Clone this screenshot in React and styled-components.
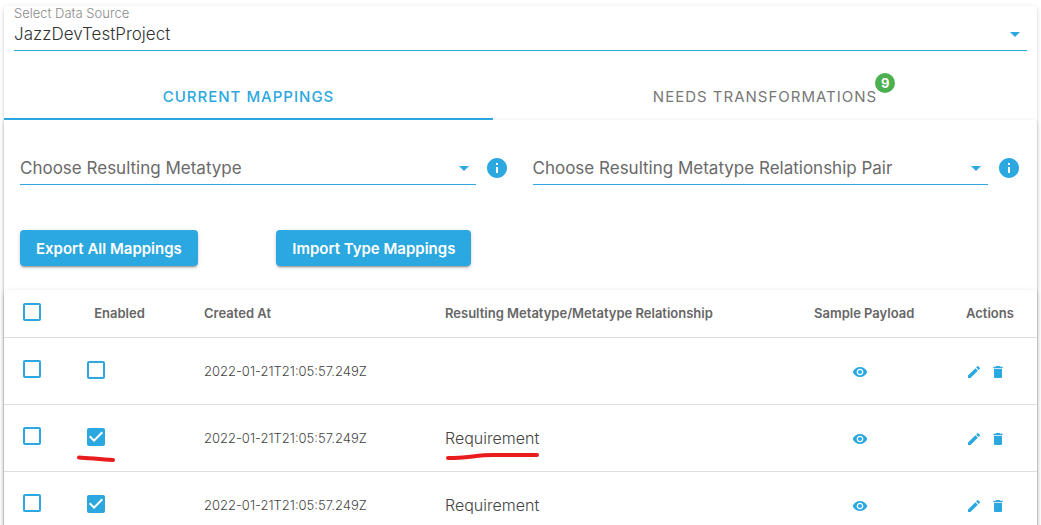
import React, { useState } from "react";
import styled, { createGlobalStyle, css } from "styled-components";
import {
  MdArrowDropDown,
  MdDelete,
  MdEdit,
  MdInfo,
  MdVisibility,
} from "react-icons/md";

const blue = "#2ca8e0";
const red = "#e81c1c";

const GlobalStyle = createGlobalStyle`
  * {
    box-sizing: border-box;
  }

  body {
    margin: 0;
    background: #fff;
    color: #444;
    font-family: "Inter", sans-serif;
    font-size: 16px;
  }
`;

//Basic surfaces
const Page = styled.main`
  height: 100vh;
  padding: 6px 4px 0;
  overflow: hidden;
`;

const raised = css`
  border-radius: 4px;
  background: #fff;
  box-shadow: 0 3px 1px -2px rgba(0, 0, 0, 0.2),
    0 2px 2px 0 rgba(0, 0, 0, 0.14), 0 1px 5px 0 rgba(0, 0, 0, 0.12);
`;

const Card = styled.section`
  ${raised}
`;

const SourceBar = styled.div`
  padding: 0 10px;
`;

//Select with the underline and the arrow
const Field = styled.div`
  flex: 1;
  min-width: 0;
`;

const FieldLabel = styled.label`
  display: block;
  color: #8a8a8a;
  font-size: 13px;
  font-weight: 300;
  line-height: 14px;
`;

const SelectBox = styled.div`
  display: grid;
  align-items: center;
  padding-bottom: 2px;
  border-bottom: 1px solid ${blue};

  svg {
    grid-area: 1 / 1;
    justify-self: end;
    color: ${blue};
    pointer-events: none;
  }
`;

const Select = styled.select`
  grid-area: 1 / 1;
  width: 100%;
  height: 28px;
  padding: 0 28px 1px 0;
  border: none;
  outline: none;
  appearance: none;
  background: transparent;
  color: ${(props) => (props.$placeholder ? "#6a6a6a" : "#333")};
  font-family: inherit;
  font-size: 17px;
  font-weight: ${(props) => (props.$placeholder ? 400 : 300)};
`;

//Tabs
const Tabs = styled.div`
  display: grid;
  grid-template-columns: 489fr 544fr;
  margin-top: 21px;
`;

const Tab = styled.button`
  height: 48px;
  padding: 0;
  border: none;
  background: transparent;
  box-shadow: ${(props) => (props.$active ? `inset 0 -2px ${blue}` : "none")};
  color: ${(props) => (props.$active ? blue : "#777")};
  font-family: inherit;
  font-size: 15px;
  font-weight: ${(props) => (props.$active ? 500 : 400)};
  letter-spacing: 1px;
  text-transform: uppercase;
  cursor: pointer;
`;

const TabText = styled.span`
  position: relative;
`;

const Badge = styled.span`
  position: absolute;
  bottom: 13px;
  left: calc(100% - 2px);
  width: 20px;
  height: 20px;
  border-radius: 50%;
  background: #4caf50;
  color: #fff;
  font-size: 13px;
  font-weight: 700;
  line-height: 20px;
  letter-spacing: 0;
  text-align: center;
`;

//Filters and the buttons below them
const Filters = styled.div`
  display: grid;
  grid-template-columns: 1fr 1fr;
  gap: 24px;
  padding: 34px 16px 0;
`;

const Filter = styled.div`
  display: flex;
  align-items: flex-start;
  gap: 9px;
`;

const IconButton = styled.button`
  display: inline-flex;
  align-items: center;
  justify-content: center;
  height: ${(props) => props.$height || 16}px;
  padding: 0;
  border: none;
  background: transparent;
  color: ${blue};
  cursor: pointer;
`;

const ButtonRow = styled.div`
  display: grid;
  grid-template-columns: repeat(4, 1fr);
  gap: 24px;
  padding: 45px 16px 24px;
`;

const Button = styled.button`
  ${raised}
  justify-self: start;
  height: 36px;
  padding: 0 16px;
  border: none;
  background: ${blue};
  color: #fff;
  font-family: inherit;
  font-size: 15px;
  font-weight: 600;
  white-space: nowrap;
  cursor: pointer;
`;

//Table
const Table = styled.table`
  width: 100%;
  border-collapse: separate;
  border-spacing: 0;
  table-layout: fixed;
`;

const Col = styled.col`
  width: ${(props) => (props.$width ? `${props.$width}px` : "auto")};
`;

const Th = styled.th`
  height: 48px;
  padding: 0 ${(props) => (props.$align === "center" ? 36 : 0)}px 2px 16px;
  border-bottom: 1px solid #dedede;
  color: #666;
  font-size: 13px;
  font-weight: 600;
  text-align: ${(props) => props.$align || "left"};
  white-space: nowrap;
`;

const Td = styled.td`
  height: 67px;
  padding: 0 0 0 16px;
  border-bottom: 1px solid #dedede;
  font-size: ${(props) => (props.$small ? 13 : 16)}px;
  font-weight: 300;
  white-space: nowrap;
`;

const CheckTd = styled(Td)`
  padding-bottom: 2px;
`;

const PayloadTd = styled(Td)`
  padding-right: 44px;
`;

const Actions = styled.div`
  display: flex;
  align-items: center;
  justify-content: ${(props) => props.$justify || "flex-start"};
  gap: 8px;
  padding-top: 2px;
`;

const CheckWrap = styled.span`
  display: grid;
  width: 18px;
  margin: ${(props) => (props.$inset ? "0 0 2px 3px" : "0")};

  input,
  svg {
    grid-area: 1 / 1;
  }

  svg {
    pointer-events: none;
  }
`;

const CheckInput = styled.input`
  width: 18px;
  height: 18px;
  margin: 0;
  border: 2px solid ${blue};
  border-radius: 2px;
  appearance: none;
  cursor: pointer;

  &:checked {
    background: ${blue};
  }
`;

//Pen strokes drawn under a cell's content
const Marked = styled.div`
  position: relative;
`;

const Stroke = styled.svg`
  position: absolute;
  top: 22px;
  left: ${(props) => props.$left}px;
  fill: none;
  stroke: ${red};
  stroke-width: 4;
  stroke-linecap: round;
  pointer-events: none;
`;

const mappings = [
  { id: 1, enabled: false, createdAt: "2022-01-21T21:05:57.249Z", result: "" },
  {
    id: 2,
    enabled: true,
    createdAt: "2022-01-21T21:05:57.249Z",
    result: "Requirement",
    marked: true,
  },
  {
    id: 3,
    enabled: true,
    createdAt: "2022-01-21T21:05:57.249Z",
    result: "Requirement",
  },
];

function Checkbox({ label, defaultChecked = false, inset }) {
  const [checked, setChecked] = useState(defaultChecked);

  return (
    <CheckWrap $inset={inset}>
      <CheckInput
        type="checkbox"
        aria-label={label}
        checked={checked}
        onChange={(e) => setChecked(e.target.checked)}
      />
      {checked && (
        <svg width="18" height="18" viewBox="3 3 18 18" aria-hidden="true">
          <path
            fill="#fff"
            d="M10 17L5 12L6.41 10.58L10 14.17L17.59 6.58L19 8Z"
          />
        </svg>
      )}
    </CheckWrap>
  );
}

function MetatypeFilter({ id, text }) {
  return (
    <Filter>
      <Field>
        <SelectBox>
          <Select id={id} aria-label={text} $placeholder>
            <option>{text}</option>
          </Select>
          <MdArrowDropDown size={24} />
        </SelectBox>
      </Field>
      <IconButton $height={28} aria-label={"About: " + text}>
        <MdInfo size={24} />
      </IconButton>
    </Filter>
  );
}

function MappingRow({ mapping }) {
  return (
    <tr>
      <CheckTd>
        <Checkbox label="Select row" inset />
      </CheckTd>
      <CheckTd>
        <Marked>
          <Checkbox label="Enabled" defaultChecked={mapping.enabled} />
          {mapping.marked && (
            <Stroke $left={-14} width="46" height="16">
              <path d="M6 7.5C16 8 28 9.5 40 10" />
            </Stroke>
          )}
        </Marked>
      </CheckTd>
      <Td $small>{mapping.createdAt}</Td>
      <Td>
        <Marked>
          {mapping.result}
          {mapping.marked && (
            <Stroke $left={0} width="98" height="16">
              <path d="M3 8C22 8 32 5 48 5H92" />
            </Stroke>
          )}
        </Marked>
      </Td>
      <PayloadTd>
        <Actions $justify="center">
          <IconButton aria-label="View sample payload">
            <MdVisibility size={16} />
          </IconButton>
        </Actions>
      </PayloadTd>
      <Td>
        <Actions>
          <IconButton aria-label="Edit mapping">
            <MdEdit size={16} />
          </IconButton>
          <IconButton aria-label="Delete mapping">
            <MdDelete size={16} />
          </IconButton>
        </Actions>
      </Td>
    </tr>
  );
}

function App() {
  const [tab, setTab] = useState("current");

  return (
    <Page>
      <GlobalStyle />
      <Card>
        <SourceBar>
          <Field>
            <FieldLabel htmlFor="source">Select Data Source</FieldLabel>
            <SelectBox>
              <Select id="source">
                <option>JazzDevTestProject</option>
              </Select>
              <MdArrowDropDown size={24} />
            </SelectBox>
          </Field>
        </SourceBar>

        <Tabs role="tablist">
          <Tab
            role="tab"
            aria-selected={tab === "current"}
            $active={tab === "current"}
            onClick={() => setTab("current")}
          >
            Current Mappings
          </Tab>
          <Tab
            role="tab"
            aria-selected={tab === "needs"}
            $active={tab === "needs"}
            onClick={() => setTab("needs")}
          >
            <TabText>
              Needs Transformations
              <Badge>9</Badge>
            </TabText>
          </Tab>
        </Tabs>

        <Card>
          <Filters>
            <MetatypeFilter id="metatype" text="Choose Resulting Metatype" />
            <MetatypeFilter
              id="pair"
              text="Choose Resulting Metatype Relationship Pair"
            />
          </Filters>
          <ButtonRow>
            <Button>Export All Mappings</Button>
            <Button>Import Type Mappings</Button>
          </ButtonRow>

          <Card>
            <Table>
              <colgroup>
                <Col $width={67} />
                <Col $width={117} />
                <Col $width={241} />
                <Col />
                <Col $width={152} />
                <Col $width={87} />
              </colgroup>
              <thead>
                <tr>
                  <Th>
                    <Checkbox label="Select all" inset />
                  </Th>
                  <Th $align="center">Enabled</Th>
                  <Th>Created At</Th>
                  <Th>Resulting Metatype/Metatype Relationship</Th>
                  <Th $align="center">Sample Payload</Th>
                  <Th>Actions</Th>
                </tr>
              </thead>
              <tbody>
                {mappings.map((mapping) => (
                  <MappingRow key={mapping.id} mapping={mapping} />
                ))}
              </tbody>
            </Table>
          </Card>
        </Card>
      </Card>
    </Page>
  );
}

export default App;
